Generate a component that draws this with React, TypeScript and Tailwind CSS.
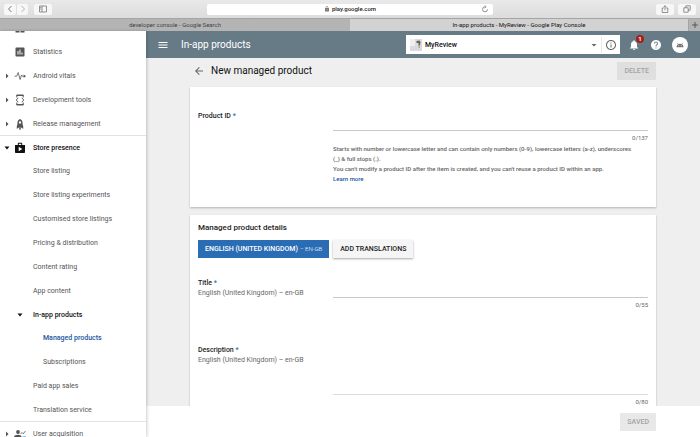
import type { ReactNode } from "react";
import {
  MdArrowBack,
  MdAssessment,
  MdDashboard,
  MdHelp,
  MdInfoOutline,
  MdLock,
  MdMenu,
  MdNotifications,
} from "react-icons/md";

type NavItem = {
  id: string;
  label?: string;
  level: 1 | 2 | 3;
  icon?: ReactNode;
  state?: "open" | "closed";
  active?: boolean;
  divider?: boolean;
};

function VitalsIcon() {
  return (
    <svg viewBox="0 0 12 12" fill="none" stroke="currentColor" strokeWidth={0.8} className="h-3 w-3">
      <path d="M.5 6.200h2.200L4.200 2.500l1.900 7L7.500 5l.8 1.200h2.200" strokeLinejoin="round" />
      <path d="M9.700 4.600L12 6.200 9.700 7.800z" fill="currentColor" stroke="none" />
    </svg>
  );
}

function DevToolsIcon() {
  return (
    <svg viewBox="0 0 12 12" fill="none" stroke="currentColor" className="h-3 w-3">
      <path d="M2.800 3.500V1.200h6.400v2.300M2.800 8.500v2.300h6.400V8.500" />
      <path d="M2.500 1.400h7M2.500 10.600h7" strokeWidth={1.4} />
      <path d="M4.200 3.800L2.200 6l2 2.200M7.800 3.800l2 2.200-2 2.200" strokeWidth={0.9} />
    </svg>
  );
}

function RocketIcon() {
  return (
    <svg viewBox="0 0 12 12" fill="currentColor" className="h-3 w-3">
      <path
        fillRule="evenodd"
        d="M6 1c1.800.8 2.600 2 2.600 4v1.600L9.200 8v3L7.700 9.700H4.300L2.800 11V8l.6-1.400V5C3.400 3 4.200 1.800 6 1zm0 2.200a1.200 1.200 0 100 2.400 1.200 1.200 0 000-2.400z"
      />
      <path d="M5 10.200h2v1.300H5z" />
    </svg>
  );
}

function StoreIcon() {
  return (
    <svg viewBox="0 0 12 12" fill="currentColor" className="h-3 w-3">
      <path
        fillRule="evenodd"
        d="M3.800 3V1.800c0-.6.400-1 1-1h2.400c.6 0 1 .4 1 1V3H11v7c0 .6-.4 1-1 1H2c-.6 0-1-.4-1-1V3zm1 0h2.400V1.800H4.800zM4.700 9.300L8.300 7 4.700 4.700z"
      />
    </svg>
  );
}

function AcquisitionIcon() {
  return (
    <svg viewBox="0 0 24 24" fill="currentColor" className="h-3 w-3">
      <circle cx="8" cy="8" r="3.800" />
      <path d="M0 20v-2c0-3 4-4.500 8-4.500s7 1.500 7 4.500v2z" />
      <path d="M13 12l3-3 2.500 2.500L23 6" fill="none" stroke="currentColor" strokeWidth={1.6} />
      <path d="M17 17h7v3h-7z" fill="#2a8fd0" />
    </svg>
  );
}

const navItems: NavItem[] = [
  { id: "dashboard", level: 1, icon: <MdDashboard className="h-3 w-3" /> },
  { id: "statistics", label: "Statistics", level: 1, icon: <MdAssessment className="h-3 w-3" /> },
  { id: "vitals", label: "Android vitals", level: 1, icon: <VitalsIcon />, state: "closed" },
  { id: "tools", label: "Development tools", level: 1, icon: <DevToolsIcon />, state: "closed" },
  { id: "release", label: "Release management", level: 1, icon: <RocketIcon />, state: "closed" },
  { id: "store", label: "Store presence", level: 1, icon: <StoreIcon />, state: "open", divider: true },
  { id: "listing", label: "Store listing", level: 2 },
  { id: "experiments", label: "Store listing experiments", level: 2 },
  { id: "customised", label: "Customised store listings", level: 2 },
  { id: "pricing", label: "Pricing & distribution", level: 2 },
  { id: "rating", label: "Content rating", level: 2 },
  { id: "content", label: "App content", level: 2 },
  { id: "in-app", label: "In-app products", level: 2, state: "open" },
  { id: "managed", label: "Managed products", level: 3, active: true },
  { id: "subscriptions", label: "Subscriptions", level: 3 },
  { id: "paid", label: "Paid app sales", level: 2 },
  { id: "translation", label: "Translation service", level: 2 },
  { id: "acquisition", label: "User acquisition", level: 1, icon: <AcquisitionIcon />, state: "closed", divider: true },
];

function Caret({ state }: { state: "open" | "closed" }) {
  return (
    <svg viewBox="0 0 6 6" fill="currentColor" className="h-1.5 w-1.5">
      {state === "open" ? <path d="M.5 1.500h5L3 4.500z" /> : <path d="M2 .5v5L4.500 3z" />}
    </svg>
  );
}

function BrowserChrome() {
  const button = "flex h-[11px] items-center justify-center rounded-xs bg-[#f7f7f7] text-[#777]";

  return (
    <div className="shrink-0">
      <div className="flex h-[18px] items-center bg-linear-to-b from-[#e9e9e9] to-[#dcdcdc] px-1">
        <div className="flex flex-1 items-center">
          <button aria-label="Back" className={`${button} w-3`}>
            <svg viewBox="0 0 8 8" fill="none" stroke="currentColor" className="h-2 w-2">
              <path d="M5.500 1L2.500 4l3 3" />
            </svg>
          </button>
          <button aria-label="Forward" className={`${button} w-3 border-l border-[#dedede]`}>
            <svg viewBox="0 0 8 8" fill="none" stroke="#b5b5b5" className="h-2 w-2">
              <path d="M2.500 1l3 3-3 3" />
            </svg>
          </button>
          <button aria-label="Show sidebar" className={`${button} ml-1.5 w-[18px]`}>
            <svg viewBox="0 0 8 8" fill="none" stroke="currentColor" strokeWidth={0.8} className="h-2 w-2">
              <path d="M.5 1h7v6h-7zM3 1v6M1.200 2.500h1M1.200 4h1" />
            </svg>
          </button>
        </div>
        <div className="flex h-[11px] w-[286px] items-center rounded-xs bg-white">
          <span className="w-4" />
          <span className="flex flex-1 items-center justify-center gap-0.5 text-[6px] leading-[10px] font-medium text-[#222]">
            <MdLock className="h-1.5 w-1.5 text-[#777]" />
            play.google.com
          </span>
          <button aria-label="Reload" className="flex w-4 items-center justify-center text-[#777]">
            <svg viewBox="0 0 8 8" fill="none" stroke="currentColor" strokeWidth={0.8} className="h-2 w-2">
              <path d="M4 1.800A2.500 2.500 0 106.500 4.300M3.600.4L5.200 1.800 3.600 3.200" />
            </svg>
          </button>
        </div>
        <div className="flex flex-1 items-center justify-end gap-1">
          <button aria-label="Share" className={`${button} w-[18px]`}>
            <svg viewBox="0 0 8 8" fill="none" stroke="currentColor" strokeWidth={0.8} className="h-2 w-2">
              <path d="M2.700 3H1.200v4.500h5.600V3H5.300M4 5.300V.8M2.600 2L4 .7 5.400 2" />
            </svg>
          </button>
          <button aria-label="Show all tabs" className={`${button} w-[18px]`}>
            <svg viewBox="0 0 8 8" fill="none" stroke="currentColor" strokeWidth={0.8} className="h-2 w-2">
              <path d="M.8 2.800h4.400v4.400H.8zM2.800 2.800v-2h4.400v4.400h-2" />
            </svg>
          </button>
        </div>
      </div>
      <div className="flex h-[13px] border-t border-[#a5a5a5] bg-[#b4b4b4] text-[6px] leading-3">
        <a href="#search" className="w-1/2 text-center text-[#444]">
          developer console - Google Search
        </a>
        <a href="#console" className="flex-1 bg-[#d2d2d2] text-center text-[#111]">
          In-app products - MyReview - Google Play Console
        </a>
        <button aria-label="New tab" className="flex w-3 items-center justify-center border-l border-[#a5a5a5]">
          <svg viewBox="0 0 8 8" fill="none" stroke="#444" strokeWidth={0.8} className="h-2 w-2">
            <path d="M4 1v6M1 4h6" />
          </svg>
        </button>
      </div>
    </div>
  );
}

function Sidebar() {
  return (
    <nav className="relative z-10 w-[146px] shrink-0 overflow-hidden bg-white shadow-[1px_0_3px_rgba(0,0,0,0.2)]">
      <ul className="-mt-[15px]">
        {navItems.map((item) => {
          const open = item.state === "open";
          const color = item.active
            ? "font-medium text-[#20559f]"
            : open
              ? "font-medium text-[#111]"
              : "text-[#555]";
          return (
            <li key={item.id} className={item.divider ? "shadow-[0_-1px_0_#e2e2e2]" : ""}>
              <a
                href={`#${item.id}`}
                aria-label={item.label ? undefined : item.id}
                className={`flex items-center text-[7px] leading-[10px] ${open ? "h-[23px]" : "h-6"} ${color}`}
              >
                <span className="flex w-[13px] justify-center">
                  {item.level === 1 && item.state && <Caret state={item.state} />}
                </span>
                <span className="flex w-[13px] justify-center">
                  {item.level === 1 ? item.icon : item.state && <Caret state={item.state} />}
                </span>
                <span className={item.level === 3 ? "ml-[17px]" : "ml-[7px]"}>{item.label}</span>
              </a>
            </li>
          );
        })}
      </ul>
    </nav>
  );
}

function AppBar() {
  return (
    <header className="flex h-[27px] shrink-0 items-center bg-[#677b87] pr-3 pl-[11px] text-white">
      <button aria-label="Menu">
        <MdMenu className="h-3 w-3" />
      </button>
      <h1 className="ml-3 text-[10px] leading-3">In-app products</h1>

      <div className="ml-auto flex h-[19px] w-[214px] items-center bg-white text-[#222]">
        <svg viewBox="0 0 12 12" className="ml-1 h-3 w-3">
          <path fill="#d9dbe0" d="M0 0h12v12H0z" />
          <path fill="#f1efee" d="M0 0h5v7H0z" />
          <path fill="#6c6558" d="M6.500 2l3-.5 1 1.500-.5 3.500H8.500L8.500 4h-2z" />
          <path fill="#b9a98c" d="M8.500 6.500H10V9H8.500z" />
        </svg>
        <div className="relative flex-1">
          <select
            aria-label="App"
            className="block w-full appearance-none bg-transparent pl-[3px] text-[7px] leading-[10px] font-medium text-[#111] outline-none"
          >
            <option>MyReview</option>
          </select>
          <svg viewBox="0 0 6 6" fill="#666" className="pointer-events-none absolute top-1/2 right-1 h-1.5 w-1.5 -translate-y-1/2">
            <path d="M.5 2h5L3 4.500z" />
          </svg>
        </div>
        <button
          aria-label="App details"
          className="flex h-4 w-[19px] items-center justify-center border-l border-[#e8e8e8] text-[#666]"
        >
          <MdInfoOutline className="h-3 w-3" />
        </button>
      </div>

      <div className="ml-2 flex items-center gap-2.5">
        <button aria-label="Notifications" className="relative">
          <MdNotifications className="h-3 w-3" />
          <span className="absolute -top-1 -right-1 flex h-2 w-2 items-center justify-center rounded-full bg-[#a3211c] text-[6px] leading-none font-bold">
            1
          </span>
        </button>
        <button aria-label="Help">
          <MdHelp className="h-3 w-3" />
        </button>
        <button aria-label="Account" className="flex h-4 w-4 items-center justify-center rounded-full bg-white">
          <svg viewBox="0 0 10 6" className="h-1.5 w-2.5">
            <path fill="#777" d="M1.500 5.300a3.500 3.500 0 017 0z" />
            <path stroke="#777" strokeWidth={0.6} d="M2.300.8l1.200 1.800M7.700.8L6.500 2.600" />
            <circle cx="3.600" cy="3.800" r=".45" fill="#fff" />
            <circle cx="6.400" cy="3.800" r=".45" fill="#fff" />
          </svg>
        </button>
      </div>
    </header>
  );
}

type FieldProps = {
  id: string;
  label: string;
  locale?: string;
  counter: string;
  multiline?: boolean;
  children?: ReactNode;
};

function Field({ id, label, locale, counter, multiline, children }: FieldProps) {
  return (
    <div className="grid grid-cols-[135px_1fr] text-[7px] leading-[10px] text-[#666]">
      <div>
        <label htmlFor={id} className="block font-medium text-[#222]">
          {label} <span className="text-[#2a6db5]">*</span>
        </label>
        {locale && <p>{locale}</p>}
      </div>
      <div>
        {multiline ? (
          <textarea id={id} className="block h-[50px] w-full resize-none border-b border-[#dcdcdc] outline-none" />
        ) : (
          <input id={id} className="block h-5 w-full border-b border-[#c8c8c8] outline-none" />
        )}
        <p className="mt-px text-right text-[6px] leading-3">{counter}</p>
        {children}
      </div>
    </div>
  );
}

export default function App() {
  return (
    <div className="flex h-screen flex-col overflow-hidden font-['Roboto',sans-serif]">
      <BrowserChrome />
      <div className="flex min-h-0 flex-1">
        <Sidebar />
        <div className="flex min-w-0 flex-1 flex-col">
          <AppBar />
          <main className="min-h-0 flex-1 overflow-hidden bg-[#efefef] px-11 pt-1">
            <div className="flex h-[18px] items-center">
              <button aria-label="Back to products" className="ml-[3px] text-[#666]">
                <MdArrowBack className="h-3 w-3" />
              </button>
              <h2 className="ml-1.5 text-[10px] leading-3 text-[#111]">New managed product</h2>
              <button className="ml-auto h-[18px] bg-[#dfdfdf] px-[7px] text-[7px] leading-[10px] font-medium text-[#a3a3a3]">
                DELETE
              </button>
            </div>

            <section className="mt-[7px] bg-white px-2 pt-6 pb-[23px] shadow-[0_1px_2px_rgba(0,0,0,0.25)]">
              <Field id="product-id" label="Product ID" counter="0/137">
                <div className="pr-2 text-[6px] font-medium">
                  <p>
                    Starts with number or lowercase letter and can contain only numbers (0-9), lowercase letters (a-z),
                    underscores
                    <br />
                    (_) &amp; full stops (.).
                  </p>
                  <p>You can't modify a product ID after the item is created, and you can't reuse a product ID within an app.</p>
                  <a href="#learn-more" className="block text-[#20559f]">
                    Learn more
                  </a>
                </div>
              </Field>
            </section>

            <section className="mt-2 bg-white px-2 pt-2 shadow-[0_1px_2px_rgba(0,0,0,0.25)]">
              <h3 className="text-[8px] leading-[10px] font-medium text-[#222]">Managed product details</h3>
              <div className="mt-[7px] flex gap-1 text-[7px] leading-[10px] font-medium">
                <button className="h-[18px] bg-[#2a6db5] px-[7px] text-white">
                  ENGLISH (UNITED KINGDOM) <span className="text-[6px] font-light">– EN-GB</span>
                </button>
                <button className="h-[18px] bg-[#f5f5f5] px-[7px] text-[#222] shadow-[0_1px_2px_rgba(0,0,0,0.35)]">
                  ADD TRANSLATIONS
                </button>
              </div>
              <div className="mt-5 space-y-[34px]">
                <Field id="title" label="Title" locale="English (United Kingdom) – en-GB" counter="0/55" />
                <Field id="description" label="Description" locale="English (United Kingdom) – en-GB" counter="0/80" multiline />
              </div>
            </section>
          </main>
          <footer className="flex h-[31px] shrink-0 items-center justify-end bg-white px-11">
            <button className="h-[18px] bg-[#e8e8e8] px-[7px] text-[7px] leading-[10px] font-medium text-[#a3a3a3]">SAVED</button>
          </footer>
        </div>
      </div>
    </div>
  );
}
